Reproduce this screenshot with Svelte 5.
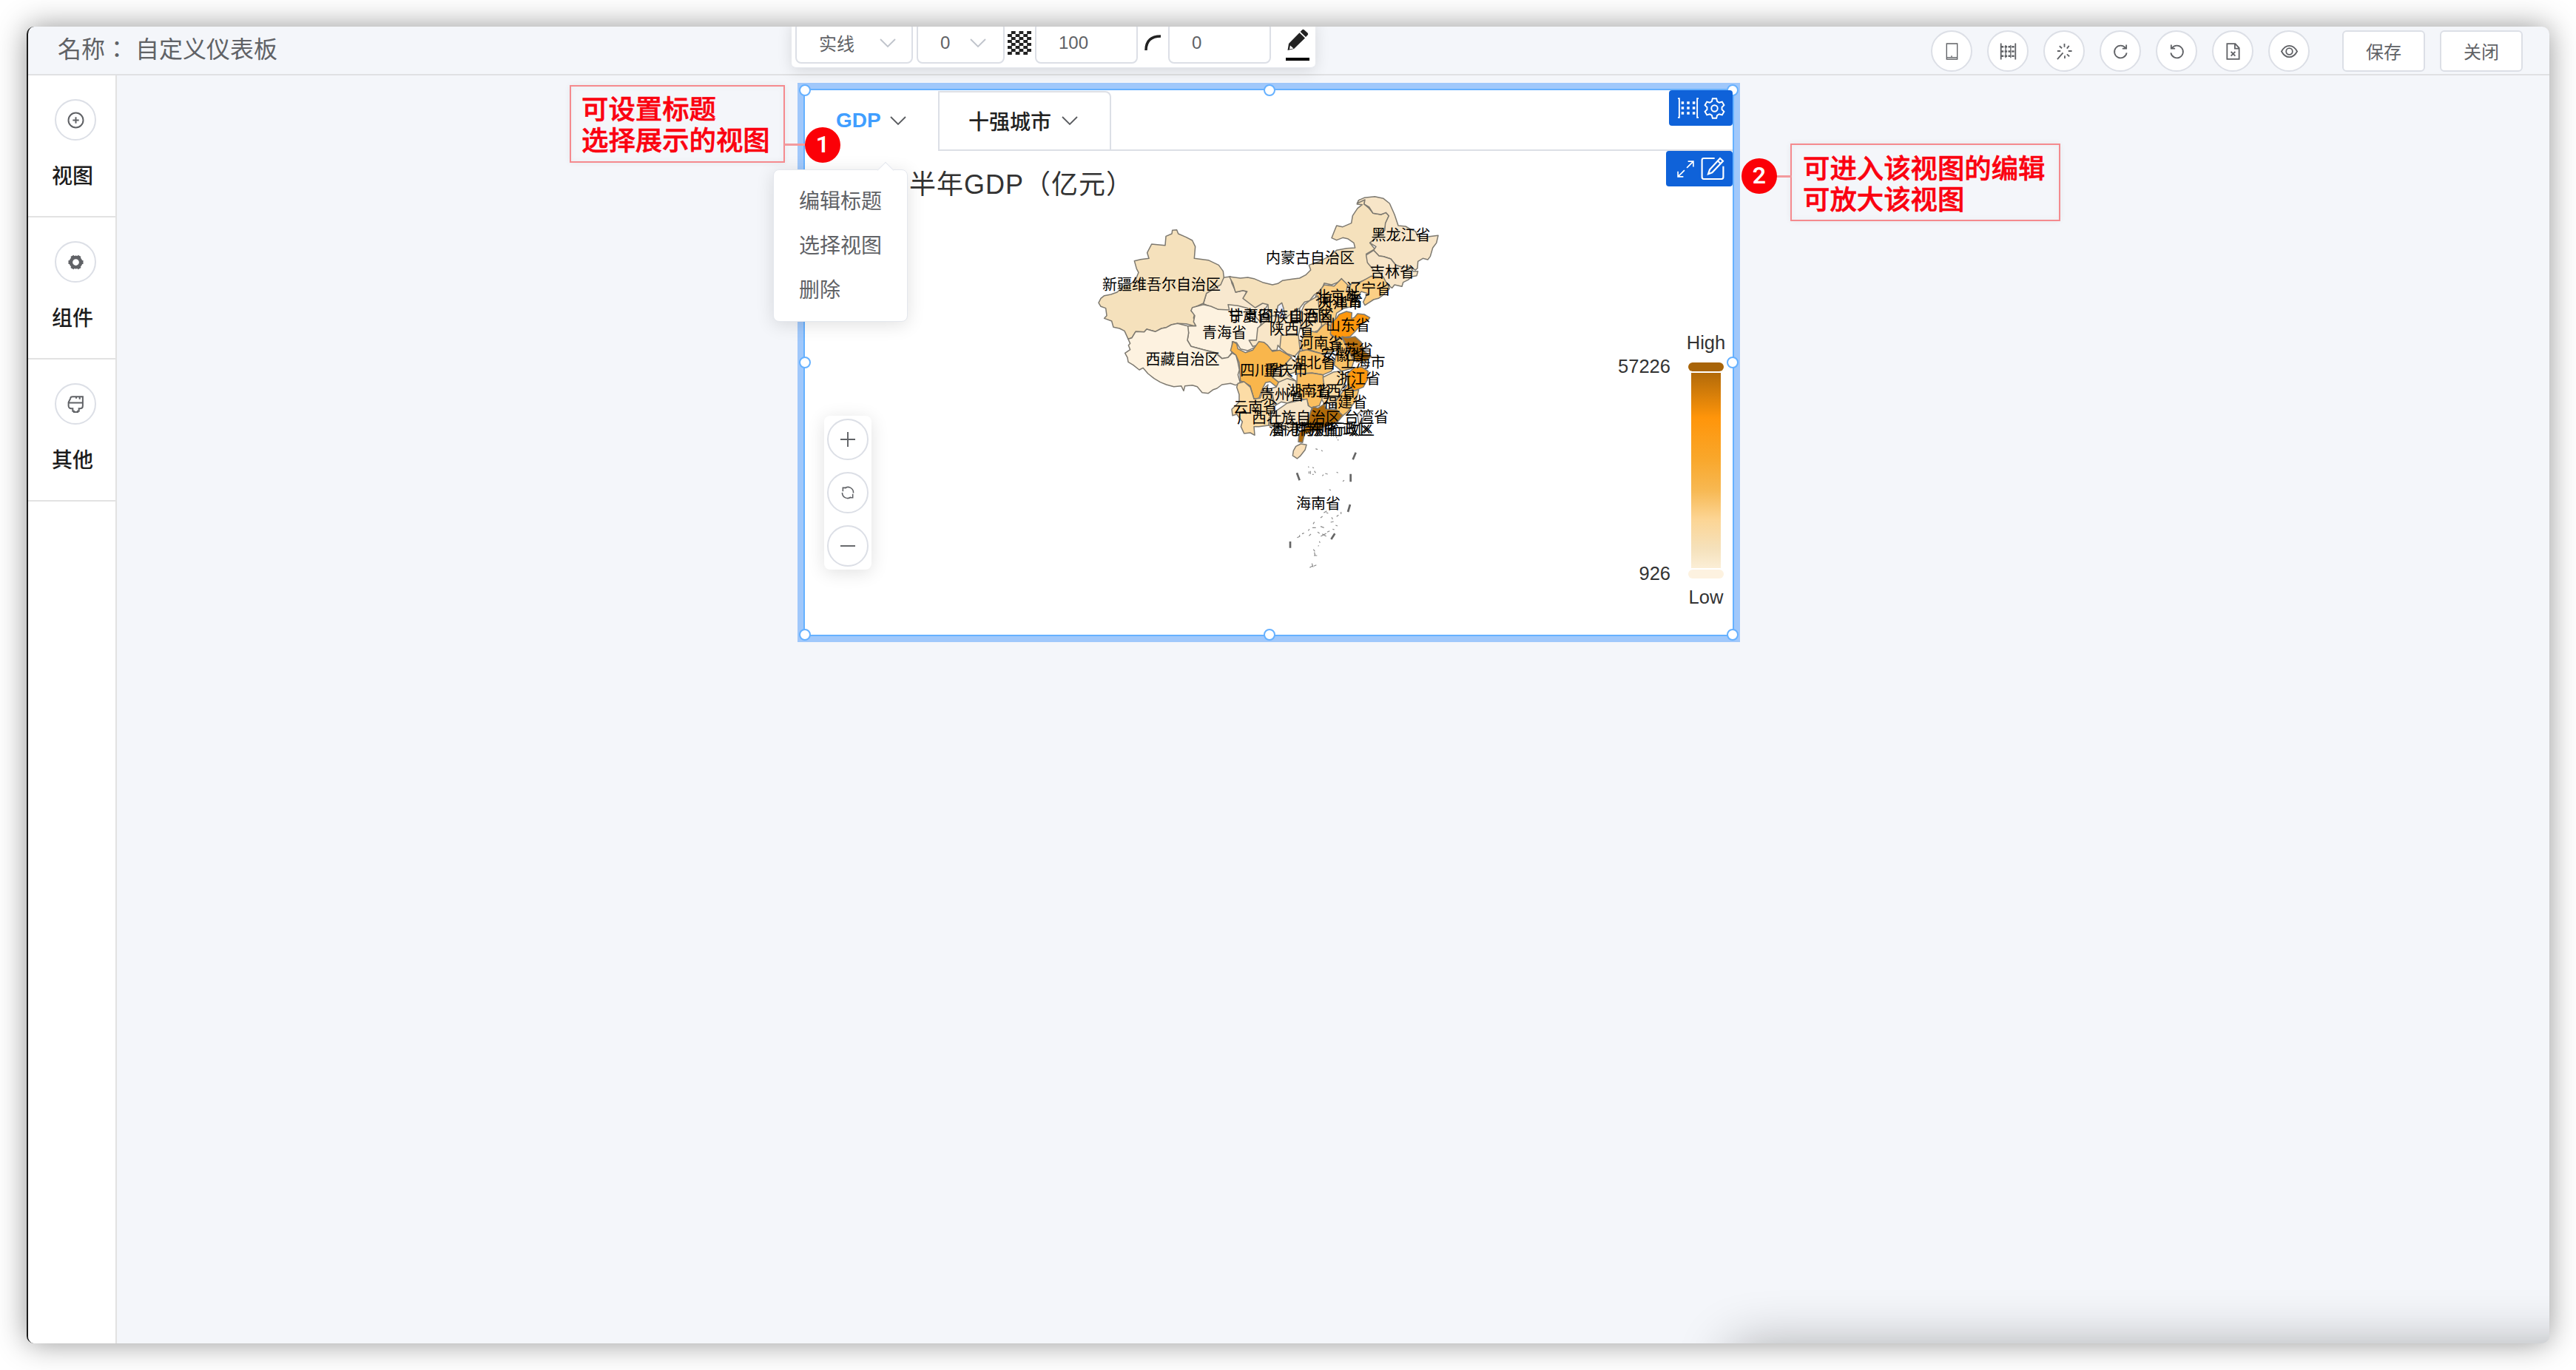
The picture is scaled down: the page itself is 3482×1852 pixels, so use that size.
<script>
  const sideItems = [
    { label: '视图', icon: 'plus' },
    { label: '组件', icon: 'cog' },
    { label: '其他', icon: 'brush' }
  ];
  const tools = ['phone', 'grid', 'magic', 'redo', 'undo', 'file', 'view'];
  const zoomTools = ['zoomIn', 'refresh', 'zoomOut'];
  const menu = ['编辑标题', '选择视图', '删除'];
  const handles = ['tl', 'tc', 'tr', 'ml', 'mr', 'bl', 'bc', 'br'];

  // Map geometry uses three sub-pixels per pixel, grouped by region.
  const west = [
    ['#f8e8cf', 'M583 375L610 372L615 398L632 435L660 428L675 434L664 458L708 495L722 480L740 474L764 480L750 505L740 530L790 560L800 640L770 690L730 640L690 640L600 560L560 505L500 482L512 440L545 420Z'],
    ['#f5e1bc', 'M195 625L180 592L160 582L135 577L128 552L98 541L108 530L104 500L84 493L75 478L84 460L98 449L125 444L150 435L175 412L200 405L225 385L237 355L229 340L220 308L245 302L279 298L272 275L290 240L345 245L348 208L372 198L374 184L392 182L398 198L430 212L455 225L467 250L463 298L520 305L562 325L580 350L583 375L570 405L540 420L512 440L500 480L455 500L450 510L464 525L460 540L472 550L465 572L430 563L395 562L370 567L350 578L330 582L305 595L270 585L260 596L225 595L210 620Z'],
    ['#fdf2e0', 'M500 485L530 492L560 505L605 507L600 485L640 490L680 500L735 560L722 590L730 610L715 630L690 630L715 655L695 665L680 672L650 665L635 640L617 635L615 680L600 700L575 704L550 680L500 668L450 655L435 630L440 600L435 572L470 572L460 555L465 530L450 510L455 497Z'],
    ['#fdf2e0', 'M195 625L210 620L225 595L260 596L270 585L305 595L330 582L350 578L370 567L395 562L437 572L440 600L435 630L450 655L500 668L550 682L575 704L600 700L617 682L632 690L640 720L646 750L640 770L650 805L630 812L610 805L575 810L555 825L540 830L520 845L495 842L475 818L455 812L425 815L420 835L410 815L380 818L350 810L325 800L300 785L275 765L255 742L240 750L215 730L195 718L192 700L182 682L203 668L196 650L203 643Z']
  ];
  const north = [
    ['#f5e1bc', 'M65 372L110 378L140 375L165 380L200 395L240 405L262 400L280 388L320 382L350 378L375 365L395 345L388 325L430 310L470 290L500 265L540 257L575 255L570 235L545 218L525 214L500 224L480 215L490 190L500 165L525 170L560 155L565 125L585 95L604 80L583 78L590 62L615 55L612 78L632 95L648 115L680 120L700 112L712 125L700 155L695 185L660 215L635 235L655 260L620 280L630 320L690 340L690 375L640 375L590 395L540 410L520 380L505 395L480 405L450 398L440 425L410 445L390 470L370 475L350 500L335 530L300 555L285 550L290 520L265 490L250 545L225 530L222 485L200 480L170 498L120 460L137 432L120 428L90 435L80 400Z'],
    ['#f7e5c8', 'M583 75L590 62L612 52L655 47L690 55L715 75L735 120L750 165L780 168L800 180L820 188L830 210L870 210L912 205L905 235L890 255L880 290L870 303L850 298L830 310L828 338L820 345L800 335L760 332L740 325L720 300L690 290L672 288L650 265L660 250L635 235L660 215L695 185L698 155L712 125L700 112L680 120L648 115L632 90L612 78L615 60Z'],
    ['#f7e5c8', 'M620 285L650 265L672 288L690 290L720 300L740 325L760 332L800 335L810 350L830 350L825 368L805 372L790 385L770 395L765 412L735 405L725 418L700 400L690 375L670 350L650 345L625 315Z'],
    ['#fccf85', 'M545 430L560 400L590 398L640 370L690 375L715 420L690 445L670 460L650 465L615 488L608 475L625 440L600 432L585 455L560 450Z'],
    ['#fccf85', 'M450 405L490 410L505 395L520 380L545 405L540 430L580 460L575 490L530 500L500 520L490 570L440 580L430 540L420 500L415 450Z'],
    ['#fbdfb0', 'M370 485L390 470L425 450L430 520L440 570L425 590L380 610L365 600L345 540Z'],
    ['#e9ecf8', 'M262 490L278 478L285 500L290 530L300 555L265 565L240 545L256 520Z']
  ];
  const south = [
    ['#f8e6c8', 'M180 100L240 50L290 60L350 20L355 90L345 130L350 190L275 185L262 170L258 190L230 192L205 165L160 175L145 150L175 150Z'],
    ['#fcdca6', 'M275 130L345 128L352 190L330 215L300 205L270 180Z'],
    ['#fbc368', 'M375 110L420 118L440 95L455 82L475 90L478 130L510 150L512 190L440 205L400 192L360 190L355 160Z'],
    ['#ff970d', 'M478 80L500 60L510 45L540 33L562 38L560 62L572 58L585 42L612 45L635 58L625 72L600 85L575 115L555 135L500 142L475 125Z'],
    ['#fbc368', 'M500 145L522 140L550 195L570 235L560 265L520 275L490 250L500 200Z'],
    ['#b87010', 'M522 135L545 140L575 135L600 158L612 195L640 215L620 235L580 238L550 195Z'],
    ['#fbc368', 'M350 195L380 188L440 205L490 235L480 275L445 290L400 283L340 285L320 262L335 235Z'],
    ['#f9b64c', 'M80 155L95 165L100 185L130 200L160 190L185 155L205 158L220 170L240 195L270 190L318 218L290 250L250 270L240 300L265 320L258 340L230 318L212 322L200 345L185 385L165 388L150 335L125 320L110 315L105 240L92 210L70 192Z'],
    ['#f8e0b6', 'M315 222L345 245L330 280L300 290L335 315L300 310L265 320L240 300L255 270L290 250Z'],
    ['#fcdca6', 'M100 325L125 318L150 340L165 388L190 385L205 345L222 330L215 360L240 370L245 430L225 470L225 495L185 500L165 500L168 535L150 525L125 528L112 500L118 480L95 450L78 455L75 430L105 400L105 370L95 340Z'],
    ['#f7e5c8', 'M215 350L255 340L265 320L300 305L335 315L340 360L350 385L300 405L275 400L250 415L240 370Z'],
    ['#fbbf5f', 'M340 287L400 283L445 290L450 330L440 390L430 415L390 425L380 395L350 385L338 350Z'],
    ['#fcdca6', 'M445 300L490 278L520 275L545 300L520 350L495 400L450 408L440 390L450 340Z'],
    ['#ff970d', 'M545 285L570 262L600 258L628 275L625 310L608 340L570 355L545 330Z'],
    ['#fbc368', 'M545 330L570 355L590 350L580 390L545 440L520 460L495 430L495 400L520 365Z'],
    ['#f7e5c8', 'M250 440L300 405L380 388L385 415L400 425L385 470L370 500L310 518L270 500L225 495L235 465Z'],
    ['#b06a0a', 'M395 440L405 420L425 425L450 408L455 428L500 432L525 455L505 480L450 500L430 515L400 520L370 530L362 565L345 562L348 525L378 500L388 465Z'],
    ['#eceef5', 'M585 450L600 435L612 440L608 475L590 495Z'],
    ['#f9dfb8', 'M325 598L335 580L355 570L378 574L372 595L352 620L340 630L322 618Z']
  ];
  const labels = [
    [1570, 385, '新疆维吾尔自治区'], [1655, 449.5, '青海省'], [1598.5, 485.5, '西藏自治区'],
    [1771, 349, '内蒙古自治区'], [1893.5, 317.5, '黑龙江省'], [1882, 367.5, '吉林省'], [1850, 391, '辽宁省'],
    [1808, 401, '北京市'], [1812, 410, '天津市'], [1811, 406.5, '河北省'],
    [1689.5, 427, '甘肃省'], [1731, 428, '宁夏回族自治区'], [1773, 427, '山西省'],
    [1746, 445, '陕西省'], [1822, 439.5, '山东省'], [1785.5, 464, '河南省'], [1826, 473, '江苏省'],
    [1815, 480, '安徽省'], [1842.5, 489.5, '上海市'], [1776, 490.5, '湖北省'], [1706, 501, '四川省'],
    [1738, 501, '重庆市'], [1836, 511.5, '浙江省'], [1733, 533.5, '贵州省'], [1769, 529, '湖南省'],
    [1803, 529, '江西省'], [1818, 543.5, '福建省'], [1697, 551, '云南省'], [1742, 564.5, '广西壮族自治区'],
    [1847, 563.5, '台湾省'], [1785, 580.5, '澳门特别行政区'], [1788, 580.5, '香港特别行政区'],
    [1780, 581, '广东省'], [1782, 681, '海南省']
  ];
  const reefs = 'M235 80l8 3M258 86l5 4M205 152l3 4M222 155l6 3M208 172v9M214 170v12M222 184h5M230 170l5 8M262 190l5-5M274 180l10 3M320 175l6 3M345 212l6-4M290 245l7 3M268 340l12-8M255 360l8-6M278 338l8 4M320 355l8-6M338 345v-9M300 358l4 8M316 390l8 3M296 378l12-3M225 385l5-8M222 400h14M255 395l14 5M205 412l5-6M180 425l8-3M160 440l12-5M170 430v7M208 433l8-7M243 418l8 5M256 435l22-12M262 425l16 10M282 418l10-5M304 406l7 2M250 455l3 6M245 475l3-3M226 488l6 8M230 500l3 13M228 513h13M211 562l12-7M220 545l5 15M228 556l10-5M318 35h4M324 43l4 3';
</script>

{#snippet icon(name, size)}
  <svg class="icon" width={size} height={size} viewBox="0 0 24 24">
    {#if name === 'plus'}
      <circle cx="12" cy="12" r="9.6" /><path d="M8 12h8M12 8v8" />
    {:else if name === 'cog'}
      <circle class="ring" cx="12" cy="12" r="6.4" />
      <path class="teeth" d="M8.300 5.600L7.200 3.700M15.700 5.600l1.100-1.900M4.600 12H2.400M19.400 12h2.200M8.300 18.400l-1.100 1.900M15.700 18.400l1.100 1.900" />
    {:else if name === 'brush'}
      <path d="M5 4.500C5 3 6 2.200 8 2.200h13V14c0 2-1 3.500-3 3.500h-2v3.300h-1.500V22h-5v-1.200H8v-3.300H6c-2 0-3.500-1.500-3.500-3.500V9.500L5 4.500M2.500 10H21M12.500 2.500v2M17 2.500v3" />
    {:else if name === 'phone'}
      <path class="fine" d="M4.500 1h15v22h-15zM4.500 20.500h15M11.500 18v3" />
    {:else if name === 'grid'}
      <path d="M1.800 .5v23M22.200 .5v23" /><path class="rows" d="M2 5.500h20M2 12h20M2 18.500h20" /><path class="fine" d="M8.500 3v18M15.500 3v18" />
    {:else if name === 'magic'}
      <path d="M12 1v5M18.500 4l-3 4M22.500 11.500h-5M19 19l-3.500-3M12.500 22v-4M5 4.500l3.500 3M2 11.500h4.500M10 14l-8 9" />
    {:else if name === 'redo'}
      <path d="M19 7.500A8.700 8.700 0 1 0 20.500 14M20 2.500v5.500h-5.500" />
    {:else if name === 'undo'}
      <path d="M5 7.500A8.700 8.700 0 1 1 3.500 14M4 2.500v5.500h5.500" />
    {:else if name === 'file'}
      <path d="M3.500 1.200H15l5.500 6v15.600h-17zM14.500 1.500V8h6M9 12.500l6 6M15 12.500l-6 6" />
    {:else if name === 'view'}
      <path d="M1 12C4 6.500 8 4 12 4s8 2.500 11 8c-3 5.500-7 8-11 8s-8-2.500-11-8z" /><circle cx="12" cy="12" r="4.500" />
    {:else if name === 'zoomIn'}
      <path d="M2 12h20M12 2v20" />
    {:else if name === 'zoomOut'}
      <path d="M2 12h20" />
    {:else if name === 'refresh'}
      <path d="M21 12.500V11A8.700 8.700 0 0 0 7 4.800M3 12v1a8.700 8.700 0 0 0 14 6.200M10 4H4v6M14 20h6v-6" />
    {:else if name === 'chevron'}
      <path d="M2 7l10 10L22 7" />
    {:else if name === 'columns'}
      <path d="M0 1h1.600v22H0M24 1h-1.600v22H24" /><path class="thick" d="M4 6h3M10.500 6h3M17 6h3M4 12h3M10.500 12h3M17 12h3M4 18h3M10.500 18h3M17 18h3" />
    {:else if name === 'gear'}
      <circle cx="12" cy="12" r="3.500" />
      <path d="M9.800 1h4.400l.8 3.300 2.300 1.300 3.200-1 2.200 3.800-2.400 2.300v2.600l2.400 2.300-2.200 3.800-3.200-1-2.300 1.300-.8 3.300H9.800L9 19.700l-2.300-1.300-3.200 1-2.200-3.800 2.400-2.300v-2.600L1.300 8.400l2.200-3.800 3.200 1L9 4.300z" />
    {:else if name === 'expand'}
      <path d="M15 2h7v7M22 2L13.500 10.500M9 22H2v-7M2 22l8.500-8.500" />
    {:else if name === 'edit'}
      <path d="M14 1.500H3Q1.200 1.500 1.200 3.300v17.400Q1.200 22.500 3 22.500h18q1.800 0 1.800-1.800V9.500M19.500 1.500l3 2.800L11.500 16l-4 1.500L9 13zM17 4l3 2.800" />
    {/if}
  </svg>
{/snippet}

<div class="desktop">
  <div class="window">
    <header class="header">
      <div class="name"><span class="colon">名称：</span><span>自定义仪表板</span></div>
      <div class="tools">
        {#each tools as t}
          <button class="round">{@render icon(t, 23)}</button>
        {/each}
      </div>
      <div class="actions">
        <button class="action">保存</button>
        <button class="action">关闭</button>
      </div>
    </header>

    <div class="body">
      <nav class="sidebar">
        {#each sideItems as s}
          <div class="side-item">
            <button class="round">{@render icon(s.icon, 25)}</button>
            <span>{s.label}</span>
          </div>
        {/each}
      </nav>

      <main class="canvas">
        <section class="card">
          <div class="tabs">
            <div class="tab active">GDP {@render icon('chevron', 24)}</div>
            <div class="tab other">十强城市 {@render icon('chevron', 24)}</div>
            <div class="tab-rest"></div>
          </div>
          <svg class="chart" viewBox="1088 204 1254 654">
            <defs>
              <linearGradient id="scale" x1="0" y1="0" x2="0" y2="1">
                <stop offset="0" stop-color="#b26a09" />
                <stop offset=".23" stop-color="#ff950a" />
                <stop offset=".44" stop-color="#f9a72b" />
                <stop offset=".6" stop-color="#f7b852" />
                <stop offset=".75" stop-color="#fcd594" />
                <stop offset=".9" stop-color="#f5e1bb" />
                <stop offset="1" stop-color="#fbeed6" />
              </linearGradient>
            </defs>
            <text class="title" x="1229" y="261.500">半年GDP（亿元）</text>
            <g class="land" transform="translate(1460 250) scale(.33333)">
              {#each west as [fill, d]}<path {fill} {d} />{/each}
            </g>
            <g class="land" transform="translate(1640 250) scale(.33333)">
              {#each north as [fill, d]}<path {fill} {d} />{/each}
            </g>
            <g class="land" transform="translate(1640 410) scale(.33333)">
              {#each south as [fill, d]}<path {fill} {d} />{/each}
            </g>
            <g transform="translate(1700 580) scale(.33333)">
              <path class="dash" d="M398 95L386 124M159 178L170 208M377 182V214M375 306L366 336M313 424L298 447M132 456V482" />
              <path class="reef" d={reefs} />
            </g>
            {#each labels as [x, y, text]}
              <text class="place" {x} y={y + 7}>{text}</text>
            {/each}
            <text class="legend mid" x="2306" y="472">High</text>
            <text class="legend end" x="2258" y="504">57226</text>
            <text class="legend end" x="2258" y="784">926</text>
            <text class="legend mid" x="2306" y="816">Low</text>
            <rect x="2282" y="490" width="48" height="12" rx="6" fill="#a86409" />
            <rect x="2286" y="504" width="40" height="264" fill="url(#scale)" />
            <rect x="2282" y="770" width="48" height="12" rx="6" fill="#fdf2e0" />
          </svg>
          <div class="zoomer">
            {#each zoomTools as z}
              <button class="round">{@render icon(z, z === 'refresh' ? 20 : 24)}</button>
            {/each}
          </div>
          {#each handles as h}<i class="handle {h}"></i>{/each}
          <div class="badge top">{@render icon('columns', 28)}{@render icon('gear', 29)}</div>
          <div class="badge low">{@render icon('expand', 25)}{@render icon('edit', 32)}</div>
        </section>
      </main>
    </div>

    <div class="toolbar">
      <div class="field wide"><span>实线</span>{@render icon('chevron', 24)}</div>
      <div class="field slim"><span>0</span>{@render icon('chevron', 24)}</div>
      <i class="checker"></i>
      <div class="field num"><span>100</span></div>
      <svg class="arc" width="24" height="24" viewBox="0 0 24 24"><path d="M2 22C2 9 9 3 22 3" /></svg>
      <div class="field num"><span>0</span></div>
      <div class="pen">
        <svg width="30" height="30" viewBox="0 0 30 30"><path d="M21 1.500q1.500-1.500 3 0l4.500 4q1.500 1.500 0 3L26 11l-7.300-7zM17.500 5.300L25 12.500 10 27l-8.500 2L3 20z" /><path class="nib" d="M5 22.500l4.500 4L4 27.500z" /></svg>
        <i></i>
      </div>
    </div>

    <div class="menu">
      {#each menu as m}<div>{m}</div>{/each}
    </div>

    <div class="note first">可设置标题<br />选择展示的视图</div>
    <i class="link one"></i>
    <b class="dot one">1</b>
    <div class="note second">可进入该视图的编辑<br />可放大该视图</div>
    <i class="link two"></i>
    <b class="dot two">2</b>
    <div class="shade"></div>
  </div>
</div>

<style>
  :global(body) { margin: 0; background: #fff; }
  * { box-sizing: border-box; }
  .desktop {
    width: 3482px; height: 1852px; padding: 36px; background: #fff; overflow: hidden;
    font-family: "Liberation Sans", "Noto Sans CJK SC", sans-serif; color: #606266;
  }
  .window {
    position: relative; display: flex; flex-direction: column; height: 1780px; overflow: hidden;
    background: #f4f6fa; border-left: 2px solid #1c1c1c; border-radius: 10px;
    box-shadow: 0 0 40px rgba(0, 0, 0, .42);
  }
  button { font: inherit; color: inherit; padding: 0; background: #fff; border: 2px solid #dcdfe6; }
  .icon { flex: none; fill: none; stroke: currentColor; stroke-width: 1.9; display: block; overflow: visible; }
  .icon .thick { stroke-width: 3; }
  .icon .fine { stroke-width: 1.4; }
  .icon .rows { stroke-width: 2.4; stroke-dasharray: 3.500 1.500; }
  .icon .ring { stroke-width: 4.400; }
  .icon .teeth { stroke-width: 4.600; }
  .round { display: grid; place-items: center; width: 56px; height: 56px; border-radius: 50%; }

  .header {
    flex: none; display: flex; align-items: center; height: 66px; padding: 2px 36px 0 40px;
    border-bottom: 2px solid #e0e1e3;
  }
  .name { flex: 1; display: flex; gap: 9px; font-size: 32px; line-height: 44px; padding-bottom: 4px; }
  .colon { font-family: "Liberation Sans", "Noto Sans CJK TC", sans-serif; }
  .tools { display: flex; gap: 20px; margin-right: 44px; }
  .actions { display: flex; gap: 20px; }
  .action { width: 112px; height: 56px; padding-bottom: 2px; border-radius: 6px; font-size: 24px; }

  .body { flex: 1; display: flex; }
  .sidebar { width: 120px; background: #fff; border-right: 2px solid #e2e2e2; }
  .side-item {
    display: flex; flex-direction: column; align-items: center; gap: 29px; height: 192px;
    padding-top: 32px; border-bottom: 2px solid #e2e2e2;
    font-size: 28px; line-height: 40px; font-weight: 500; color: #1c1c1c;
  }
  .side-item .round { margin-left: 10px; color: #606266; }
  .side-item span { margin-left: 2px; }

  .canvas { flex: 1; padding: 10px 0 0 920px; }
  .card {
    position: relative; display: flex; flex-direction: column; width: 1274px; height: 756px;
    padding: 2px; border: 8px solid #a0c8fb; background: #fff; box-shadow: inset 0 0 0 2px #66b1ff;
  }
  .tabs { display: flex; height: 82px; padding-top: 1px; font-size: 28px; font-weight: 500; }
  .tab { display: flex; align-items: center; gap: 13px; padding-bottom: 1px; }
  .tab .icon { color: #5a5c60; stroke-width: 1.800; }
  .active { width: 180px; padding-left: 42px; gap: 11px; color: #409eff; font-weight: 600; }
  .other {
    width: 234px; padding-left: 39px; color: #222; border: 2px solid #dcdfe6;
    border-top-right-radius: 8px;
  }
  .tab-rest { flex: 1; border-bottom: 2px solid #dcdfe6; }
  .chart { display: block; width: 1254px; height: 654px; }
  .title { font-size: 36px; fill: #333; letter-spacing: 1px; }
  .land { stroke: #7d7970; stroke-width: 4.500; stroke-linejoin: round; }
  .dash { stroke: #666; stroke-width: 8; }
  .reef { fill: none; stroke: #8a8a8a; stroke-width: 3.500; }
  .place { font-size: 20px; fill: #000; text-anchor: middle; }
  .legend { font-size: 25.500px; fill: #333; }
  .mid { text-anchor: middle; }
  .end { text-anchor: end; }

  .zoomer {
    position: absolute; left: 28px; top: 442px; display: flex; flex-direction: column; gap: 16px;
    padding: 4px; border-radius: 8px; background: #fff; box-shadow: 0 4px 24px rgba(0, 0, 0, .12);
  }
  .zoomer .icon { margin: 0 1px 1px 0; }
  .badge {
    position: absolute; right: 2px; display: flex; align-items: center; height: 48px;
    border-radius: 4px; background: #0f62d9; color: #fff;
  }
  .badge .icon { stroke-width: 1.600; }
  .badge.top { top: 2px; width: 86px; gap: 7px; padding-left: 12px; }
  .badge.low { top: 84px; width: 90px; gap: 8px; padding-left: 14px; }
  .handle {
    position: absolute; width: 16px; height: 16px; border: 2px solid #66b1ff; border-radius: 50%;
    background: #fff; transform: translate(-50%, -50%);
  }
  .tl, .ml, .bl { left: 2px; }
  .tc, .bc { left: 630px; }
  .tr, .mr, .br { left: 1256px; }
  .tl, .tc, .tr { top: 2px; }
  .ml, .mr { top: 370px; }
  .bl, .bc, .br { top: 738px; }

  .toolbar {
    position: absolute; left: 1032px; top: -8px; display: flex; align-items: center; width: 708px;
    height: 64px; padding: 4px 7px 8px 5px; border-radius: 6px; background: #fff;
    border-bottom: 1px solid #e4e7ed; box-shadow: 0 4px 20px rgba(0, 0, 0, .12); font-size: 24px;
  }
  .field {
    display: flex; flex: none; align-items: center; height: 56px; border: 2px solid #dcdfe6; border-radius: 8px;
    padding-left: 30px;
  }
  .field .icon { color: #c0c4cc; }
  .wide { width: 159px; gap: 33px; }
  .slim { width: 119px; margin-left: 5px; gap: 26px; }
  .num { width: 139px; }
  .checker {
    flex: none; width: 32px; height: 32px; margin: 0 5px 0 4px; background:
      repeating-conic-gradient(#222 0 25%, #fff 0 50%) 0 0 / 10.670px 8px;
  }
  .arc { flex: none; margin: 0 8px 0 9px; fill: none; stroke: #222; stroke-width: 3.500; }
  .pen { margin-left: 20px; display: flex; flex-direction: column; gap: 9px; align-items: center; padding-top: 5px; }
  .pen svg { fill: #222; display: block; }
  .pen .nib { fill: #fff; }
  .pen i { width: 32px; height: 4px; background: #000; }

  .menu {
    position: absolute; left: 1007px; top: 193px; width: 182px; height: 206px; padding: 13px 0 0 34px;
    border: 1px solid #e4e7ed; border-radius: 8px; background: #fff;
    box-shadow: 0 4px 24px rgba(0, 0, 0, .12); font-size: 28px; line-height: 60px;
  }
  .menu::before {
    content: ""; position: absolute; left: 143px; top: -8px; width: 15px; height: 15px;
    background: #fff; border: 1px solid #e4e7ed; border-right: 0; border-bottom: 0; transform: rotate(45deg);
  }
  .note {
    position: absolute; height: 105px; border: 2px solid #f58a8e;
    color: #fb0010; font-size: 36.400px; font-weight: 500; line-height: 42px; white-space: nowrap;
    -webkit-text-stroke: .6px #fb0010;
    box-shadow: 0 0 8px rgba(0, 0, 0, .06), inset 0 0 8px rgba(0, 0, 0, .04);
  }
  .first { left: 732px; top: 79px; width: 291px; padding: 11px 0 0 14px; }
  .second { left: 2382px; top: 158px; width: 365px; padding: 12px 0 0 15px; }
  .link { position: absolute; height: 3px; background: #f39a9d; }
  .link.one { left: 1022px; top: 158px; width: 32px; }
  .link.two { left: 2362px; top: 201px; width: 22px; }
  .dot {
    position: absolute; width: 48px; height: 48px; border-radius: 50%; background: #fb0007;
    color: #fff; font: 600 32px/47px Roboto, sans-serif; text-align: center;
  }
  .dot.one { left: 1050px; top: 136px; }
  .dot.two { left: 2316px; top: 178px; }
  .shade {
    position: absolute; left: 2302px; top: 1784px; width: 1240px; height: 80px;
    border-radius: 20px; box-shadow: 0 0 72px rgba(0, 0, 0, .32);
  }
</style>
